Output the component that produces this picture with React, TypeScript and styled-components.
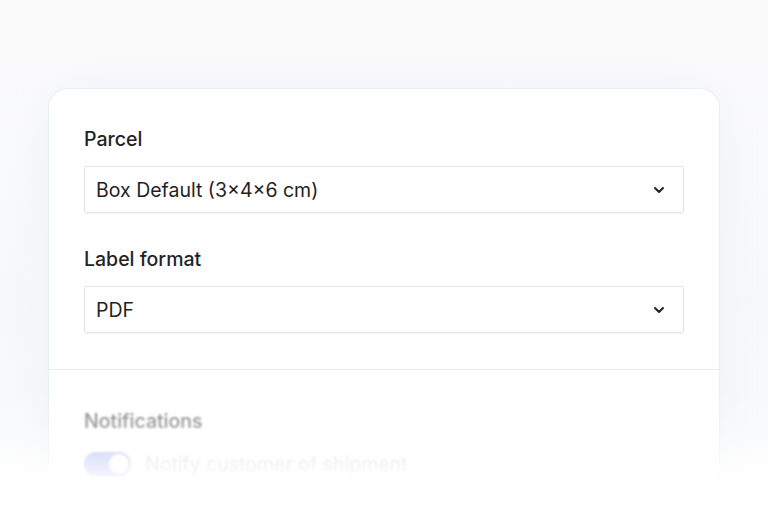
import styled, { createGlobalStyle } from "styled-components";
import { ChevronDown } from "lucide-react";

const Global = createGlobalStyle`
  html, body {
    margin: 0;
    padding: 0;
    background: #f8f9fa;
    font-family: Inter, "Noto Sans", sans-serif;
    overflow: hidden;
  }
`;

const Page = styled.div`
  position: relative;
  width: 768px;
  height: 508px;
  overflow: hidden;
  background: linear-gradient(180deg, #fbfbfc 0%, #f7f8fa 60%, #f9fafc 100%);
  padding: 88px 48px 0;
  box-sizing: border-box;
`;

const Card = styled.div`
  background: #fff;
  border: 1px solid #e9edf5;
  border-bottom: none;
  border-radius: 20px 20px 0 0;
  box-shadow: 0 0 40px rgba(200, 205, 220, 0.16);
  height: 460px;
  box-sizing: border-box;
`;

const Section = styled.div`
  padding: 38px 35px 36px;
  display: flex;
  flex-direction: column;
`;

const Field = styled.div`
  display: flex;
  flex-direction: column;
  gap: 15px;
  & + & {
    margin-top: 34px;
  }
`;

const Label = styled.label`
  font-size: 19.5px;
  font-weight: 500;
  color: #232325;
  line-height: 24px;
`;

const Select = styled.div`
  height: 47px;
  box-sizing: border-box;
  border: 1px solid #e3e4e6;
  border-radius: 2px;
  display: flex;
  align-items: center;
  justify-content: space-between;
  padding: 0 16px 0 11px;
  font-size: 19.5px;
  color: #1f1f21;
  box-shadow: 0 1px 1px rgba(0, 0, 0, 0.03);
`;

const Divider = styled.div`
  height: 1px;
  background: #ececee;
`;

const Notify = styled.div`
  padding: 39px 35px 0;
  display: flex;
  flex-direction: column;
  gap: 19px;
  filter: blur(1px);
`;

const SubLabel = styled.div`
  font-size: 19.5px;
  line-height: 24px;
  font-weight: 500;
  color: #808085;
`;

const Row = styled.div`
  display: flex;
  align-items: center;
  gap: 14px;
`;

const Toggle = styled.div<{ on: boolean }>`
  width: 47px;
  height: 24px;
  border-radius: 12px;
  background: ${({ on }) => (on ? "#a4adf3" : "#ddd")};
  position: relative;
  flex-shrink: 0;
  &::after {
    content: "";
    position: absolute;
    top: 2px;
    left: ${({ on }) => (on ? "25px" : "2px")};
    width: 20px;
    height: 20px;
    border-radius: 50%;
    background: #fff;
  }
`;

const ToggleText = styled.span`
  font-size: 19.5px;
  color: #c8c8cc;
`;

const Fade = styled.div`
  position: absolute;
  left: 0;
  right: 0;
  bottom: 0;
  height: 120px;
  pointer-events: none;
  background: linear-gradient(
    180deg,
    rgba(255, 255, 255, 0) 0%,
    rgba(255, 255, 255, 0.2) 30%,
    rgba(255, 255, 255, 0.7) 60%,
    #fff 85%
  );
`;

const fields = [
  { label: "Parcel", value: "Box Default (3×4×6 cm)" },
  { label: "Label format", value: "PDF" },
];

export default function App() {
  return (
    <>
      <Global />
      <Page>
        <Card>
          <Section>
            {fields.map((f) => (
              <Field key={f.label}>
                <Label>{f.label}</Label>
                <Select>
                  <span>{f.value}</span>
                  <ChevronDown size={16} strokeWidth={3} color="#1f1f21" />
                </Select>
              </Field>
            ))}
          </Section>
          <Divider />
          <Notify>
            <SubLabel>Notifications</SubLabel>
            <Row>
              <Toggle on />
              <ToggleText>Notify customer of shipment</ToggleText>
            </Row>
          </Notify>
        </Card>
        <Fade />
      </Page>
    </>
  );
}
